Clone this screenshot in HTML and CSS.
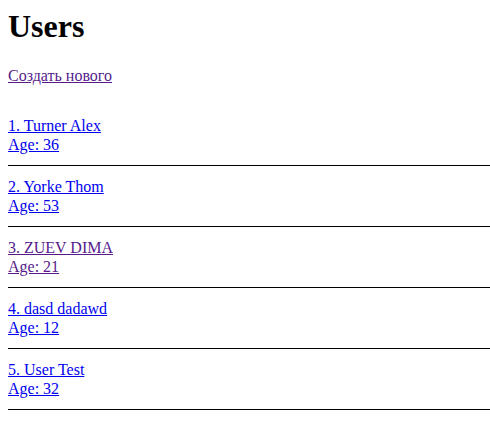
FILE: index.html
```html
<!DOCTYPE html>
<html lang="ru">
<head>
<meta charset="utf-8">
<title>Users</title>
<link rel="stylesheet" href="styles.css">
</head>
<body>
<h1 class="title">Users</h1>
<a class="link visited create" href="#new">Создать нового</a>
<div class="users">
  <div class="user">
    <div class="user-info">
      <a class="link" href="#u1">1. Turner Alex</a><br>
      <a class="link" href="#u1">Age: 36</a>
    </div>
    <hr class="sep">
  </div>
  <div class="user">
    <div class="user-info">
      <a class="link" href="#u2">2. Yorke Thom</a><br>
      <a class="link" href="#u2">Age: 53</a>
    </div>
    <hr class="sep">
  </div>
  <div class="user">
    <div class="user-info">
      <a class="link visited" href="#u3">3. ZUEV DIMA</a><br>
      <a class="link visited" href="#u3">Age: 21</a>
    </div>
    <hr class="sep">
  </div>
  <div class="user">
    <div class="user-info">
      <a class="link" href="#u4">4. dasd dadawd</a><br>
      <a class="link" href="#u4">Age: 12</a>
    </div>
    <hr class="sep">
  </div>
  <div class="user">
    <div class="user-info">
      <a class="link" href="#u5">5. User Test</a><br>
      <a class="link" href="#u5">Age: 32</a>
    </div>
    <hr class="sep">
  </div>
</div>
</body>
</html>
```
FILE: styles.css
```css
body {
  margin: 8px 0 8px 8px;
  font-family: "Liberation Serif", "Times New Roman", serif;
  font-size: 16px;
  line-height: 18.4px;
  color: #000;
  background: #fff;
}

.title {
  margin: 0 0 22px;
  font-size: 32px;
  line-height: 37px;
  font-weight: bold;
}

.link {
  color: #0000ee;
  text-decoration: underline;
}

.link.visited {
  color: #551a8b;
}

.create {
  display: block;
  width: max-content;
}

.users {
  margin-top: 32px;
}

.sep {
  margin: 10.6px 0 12.6px;
  border: 0;
  border-top: 1px solid #000;
  height: 0;
}
```
